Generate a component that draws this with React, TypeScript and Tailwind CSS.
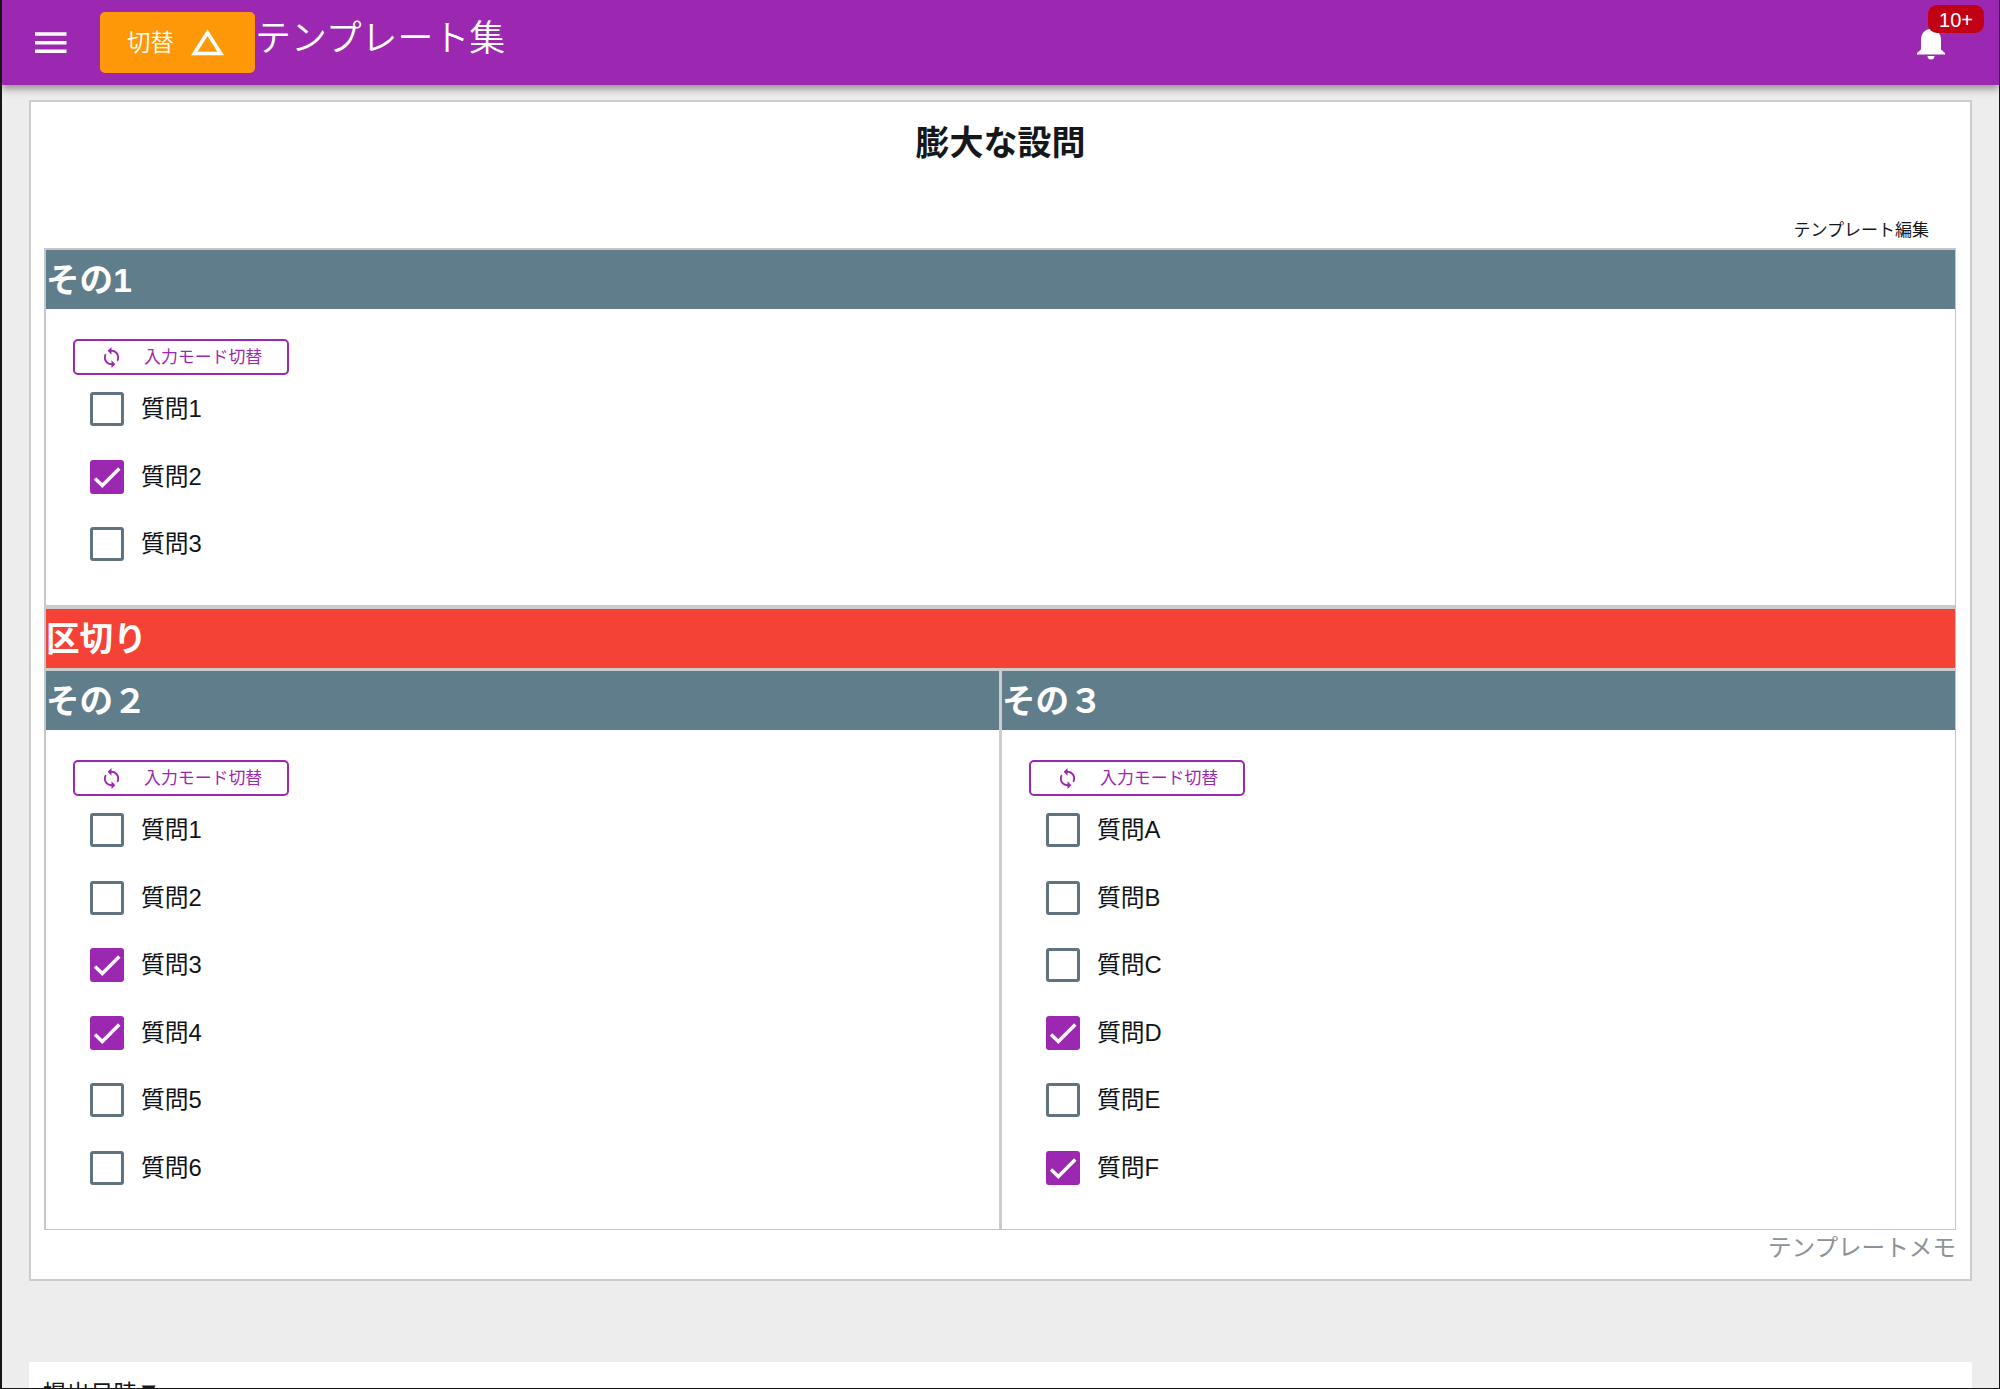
type Item = { label: string; checked?: boolean };

function Check({ label, checked }: Item) {
  return (
    <label className="flex h-[67.6px] items-start">
      {checked ? (
        <span className="mt-px flex size-[34px] shrink-0 items-center justify-center rounded-[3px] bg-[#9c27b0]">
          <svg viewBox="0 0 34 34" className="size-[34px]" fill="none" stroke="#fff" strokeWidth="3.4">
            <path d="M5 18.500 L12.300 25.500 L29.300 8.500" />
          </svg>
        </span>
      ) : (
        <span className="mt-px size-[34px] shrink-0 rounded-[3px] border-[3px] border-[#5f7480]" />
      )}
      <span className="ml-[17px] text-[23.8px] leading-[35px] text-[#101418]">{label}</span>
    </label>
  );
}

function Bar({ title, red }: { title: string; red?: boolean }) {
  return (
    <div
      className={
        red
          ? "h-[59px] bg-[#f44336] text-[33.6px] font-bold leading-[61px] text-white"
          : "h-[59px] bg-[#607d8b] text-[33.6px] font-bold leading-[61px] text-white"
      }
    >
      {title}
    </div>
  );
}

function Section({ title, items }: { title: string; items: Item[] }) {
  return (
    <section className="min-w-0 flex-1">
      <Bar title={title} />
      <div className="pl-[27px] pt-[30px]">
        <button className="flex h-[36px] w-[216px] items-center rounded-[5px] border-2 border-[#9c27b0] text-[#9c27b0]">
          <svg viewBox="4 1 16 22" className="ml-[28px] h-[21px] w-[17px] shrink-0" fill="currentColor">
            <path d="M12 4V1L8 5l4 4V6c3.31 0 6 2.69 6 6 0 1.01-.25 1.97-.7 2.8l1.46 1.46C19.54 15.03 20 13.57 20 12c0-4.42-3.58-8-8-8zm0 14c-3.31 0-6-2.69-6-6 0-1.01.25-1.97.7-2.8L5.24 7.74C4.46 8.97 4 10.43 4 12c0 4.42 3.58 8 8 8v3l4-4-4-4v3z" />
          </svg>
          <span className="ml-[24px] whitespace-nowrap pt-[2px] text-[16.9px] leading-[30px]">入力モード切替</span>
        </button>
        <div className="pb-[10px] pl-[17px] pt-[16px]">
          {items.map((i) => (
            <Check key={i.label} {...i} />
          ))}
        </div>
      </div>
    </section>
  );
}

const first: Item[] = [{ label: "質問1" }, { label: "質問2", checked: true }, { label: "質問3" }];
const second: Item[] = [
  { label: "質問1" },
  { label: "質問2" },
  { label: "質問3", checked: true },
  { label: "質問4", checked: true },
  { label: "質問5" },
  { label: "質問6" },
];
const third: Item[] = [
  { label: "質問A" },
  { label: "質問B" },
  { label: "質問C" },
  { label: "質問D", checked: true },
  { label: "質問E" },
  { label: "質問F", checked: true },
];

export default function App() {
  return (
    <div className="flex h-[1389px] w-[2000px] flex-col overflow-hidden border-b border-l-2 border-r border-[#151515] bg-[#ededed] font-['Liberation_Sans','Noto_Sans_CJK_JP',sans-serif] text-[#15181b]">
      <header className="flex h-[85px] shrink-0 items-start bg-[#9c27b0] text-white shadow-[0_3px_6px_rgba(0,0,0,0.25),0_6px_8px_rgba(0,0,0,0.16)]">
        <svg viewBox="0 0 32 22" className="ml-[33px] mt-[32px] h-[22px] w-[32px] shrink-0" fill="currentColor">
          <path d="M0 .3h31.500v3.500H0zM0 9h31.500v3.500H0zM0 17.600h31.500v3.500H0z" />
        </svg>
        <button className="ml-[33px] mt-[12px] flex h-[61px] w-[155px] shrink-0 items-center rounded-[5px] bg-[#ff9808] pl-[27px]">
          <span className="whitespace-nowrap text-[23.500px] font-[350] leading-[60px]">切替</span>
          <svg viewBox="0 0 33 27" className="ml-[17px] h-[27px] w-[33px] shrink-0" fill="none" stroke="currentColor" strokeWidth="3.6">
            <path d="M16.500 3.700 L29.700 24.500 H3.300z" />
          </svg>
        </button>
        <h1 className="mt-[15px] whitespace-nowrap text-[35.900px] font-[350] leading-[48px]">テンプレート集</h1>
        <div className="relative ml-auto mr-[54px] mt-[29px] h-[31px] w-[28px] shrink-0">
          <svg viewBox="0 0 28 31" className="h-[31px] w-[28px]" fill="currentColor">
            <path d="M14 0C8 0 4 4.500 4 11v9.500L0 24v1.500h28V24l-4-3.500V11C24 4.500 20 0 14 0zM10.500 27h7a3.500 3.500 0 0 1-7 0z" />
          </svg>
          <span className="absolute left-[11px] top-[-24px] flex h-[28px] w-[56px] items-center justify-center rounded-[9px] bg-[#c10015] pt-[2px] text-[20px] leading-none">
            10+
          </span>
        </div>
      </header>

      <main className="ml-[27px] mt-[15px] flex h-[1181px] w-[1943px] shrink-0 flex-col border-2 border-[#ccc] bg-white px-[13px]">
        <h2 className="mt-[16px] h-[50px] text-center text-[34px] font-bold leading-[50px]">膨大な設問</h2>
        <div className="mt-[50px] pr-[28px] text-right text-[17px] leading-[26px]">テンプレート編集</div>
        <div className="mt-[4px] w-[1912px] border-2 border-b border-r border-[#c4c6c7]">
          <div className="h-[355px]">
            <Section title="その1" items={first} />
          </div>
          <div className="border-b-[3px] border-t-4 border-[#ccc]">
            <Bar title="区切り" red />
          </div>
          <div className="flex h-[558px]">
            <Section title="その２" items={second} />
            <div className="w-[3px] bg-[#ccc]" />
            <Section title="その３" items={third} />
          </div>
        </div>
        <div className="w-[1912px] pt-px text-right text-[23.600px] leading-[34px] text-[#8d9396]">テンプレートメモ</div>
      </main>

      <section className="ml-[27px] mt-[81px] flex h-[60px] w-[1943px] shrink-0 rounded-t-[2px] bg-white pl-[14px] pt-[15px] text-[23.500px] leading-[34px]">
        <span>提出日時</span>
        <span className="-mt-[3px]">▼</span>
      </section>
    </div>
  );
}
